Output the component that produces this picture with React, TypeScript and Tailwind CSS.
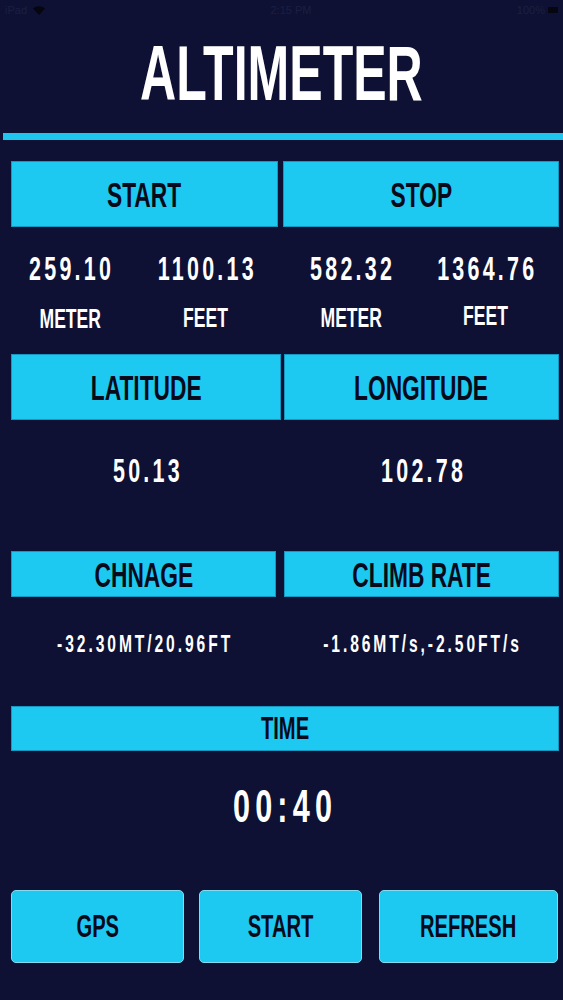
import React from 'react';

const FONT = "font-['Liberation_Sans',Arial,sans-serif]";

// condensed look: Liberation Sans squeezed horizontally
const Cond: React.FC<{ className?: string; children: React.ReactNode }> = ({ className = '', children }) => (
  <span className={`inline-block whitespace-nowrap leading-none font-bold scale-x-[0.65] ${className}`}>{children}</span>
);

const HeadBox: React.FC<{ label: string; h: string; size?: string }> = ({ label, h, size = 'text-[35px]' }) => (
  <div className={`${h} bg-[#1dc9f0] border border-[#1597c0] flex items-center justify-center text-[#080a1c]`}>
    <Cond className={size}>{label}</Cond>
  </div>
);

const Cell: React.FC<{ children: React.ReactNode; className?: string }> = ({ children, className = '' }) => (
  <div className={`flex items-center justify-center ${className}`}>{children}</div>
);

const Value: React.FC<{ text: string }> = ({ text }) => (
  <Cond className="text-[33px] tracking-[5px] pl-[5px] text-white">{text}</Cond>
);

const Unit: React.FC<{ text: string }> = ({ text }) => (
  <Cond className="text-[27px] text-white">{text}</Cond>
);

const ActionButton: React.FC<{ label: string; w: string }> = ({ label, w }) => (
  <button className={`${w} h-[73px] rounded-[5px] bg-[#1dc9f0] border border-[#86d9ef] flex items-center justify-center text-[#080a1c]`}>
    <Cond className="text-[31px]">{label}</Cond>
  </button>
);

export default function App() {
  return (
    <div className={`${FONT} w-full min-h-[1000px] bg-[#0e1133] flex flex-col`}>
      {/* status bar */}
      <div className="h-[20px] flex items-center justify-between px-[5px] text-[11px] text-[#1c1f44]">
        <div className="flex items-center gap-[6px]">
          <span>iPad</span>
          <svg width="12" height="9" viewBox="0 0 12 9" fill="#05060f">
            <path d="M6 9 L0 2.5 A9 9 0 0 1 12 2.5 Z" />
          </svg>
        </div>
        <span className="pl-[20px]">2:15 PM</span>
        <div className="flex items-center gap-[3px]">
          <span>100%</span>
          <div className="w-[10px] h-[6px] rounded-[1px] bg-[#05060f]" />
        </div>
      </div>

      {/* title */}
      <div className="h-[113px] flex items-center justify-center pb-[6px]">
        <Cond className="text-[77px] text-white">ALTIMETER</Cond>
      </div>

      <div className="ml-[3px] h-[7px] bg-[#1ec6ee]" />

      {/* start / stop */}
      <div className="mt-[21px] ml-[11px] grid grid-cols-[267px_276px] gap-x-[5px]">
        <HeadBox label="START" h="h-[66px]" />
        <HeadBox label="STOP" h="h-[66px]" />
      </div>

      <div className="mt-[25px] ml-[11px] grid grid-cols-[118px_154px_136px_134px]">
        <Cell className="h-[32px]"><Value text="259.10" /></Cell>
        <Cell className="h-[32px]"><Value text="1100.13" /></Cell>
        <Cell className="h-[32px]"><Value text="582.32" /></Cell>
        <Cell className="h-[32px]"><Value text="1364.76" /></Cell>
      </div>

      <div className="mt-[22px] ml-[11px] grid grid-cols-[118px_154px_136px_134px]">
        <Cell className="h-[24px] pt-[3px]"><Unit text="METER" /></Cell>
        <Cell className="h-[24px]"><Unit text="FEET" /></Cell>
        <Cell className="h-[24px]"><Unit text="METER" /></Cell>
        <Cell className="h-[24px] pb-[3px]"><Unit text="FEET" /></Cell>
      </div>

      {/* latitude / longitude */}
      <div className="mt-[24px] ml-[11px] grid grid-cols-[270px_275px] gap-x-[3px]">
        <HeadBox label="LATITUDE" h="h-[66px]" />
        <HeadBox label="LONGITUDE" h="h-[66px]" />
      </div>

      <div className="mt-[34px] ml-[11px] grid grid-cols-[270px_275px] gap-x-[3px]">
        <Cell className="h-[32px]"><Value text="50.13" /></Cell>
        <Cell className="h-[32px]"><Value text="102.78" /></Cell>
      </div>

      {/* change / climb rate */}
      <div className="mt-[65px] ml-[11px] grid grid-cols-[265px_275px] gap-x-[8px]">
        <HeadBox label="CHNAGE" h="h-[46px]" />
        <HeadBox label="CLIMB RATE" h="h-[46px]" />
      </div>

      <div className="mt-[35px] ml-[11px] grid grid-cols-[265px_275px] gap-x-[8px]">
        <Cell className="h-[24px]">
          <Cond className="text-[24px] tracking-[4.5px] pl-[4.5px] text-white">-32.30MT/20.96FT</Cond>
        </Cell>
        <Cell className="h-[24px]">
          <Cond className="text-[24px] tracking-[4.5px] pl-[4.5px] text-white">-1.86MT/s,-2.50FT/s</Cond>
        </Cell>
      </div>

      {/* time */}
      <div className="mt-[50px] ml-[11px] w-[548px]">
        <HeadBox label="TIME" h="h-[45px]" size="text-[31px]" />
      </div>

      <div className="mt-[30px] h-[48px] flex items-center justify-center">
        <Cond className="text-[47px] tracking-[8px] pl-[12px] text-white">00:40</Cond>
      </div>

      {/* actions */}
      <div className="mt-[61px] ml-[11px] flex">
        <ActionButton label="GPS" w="w-[173px]" />
        <div className="w-[15px]" />
        <ActionButton label="START" w="w-[163px]" />
        <div className="w-[17px]" />
        <ActionButton label="REFRESH" w="w-[179px]" />
      </div>
    </div>
  );
}
